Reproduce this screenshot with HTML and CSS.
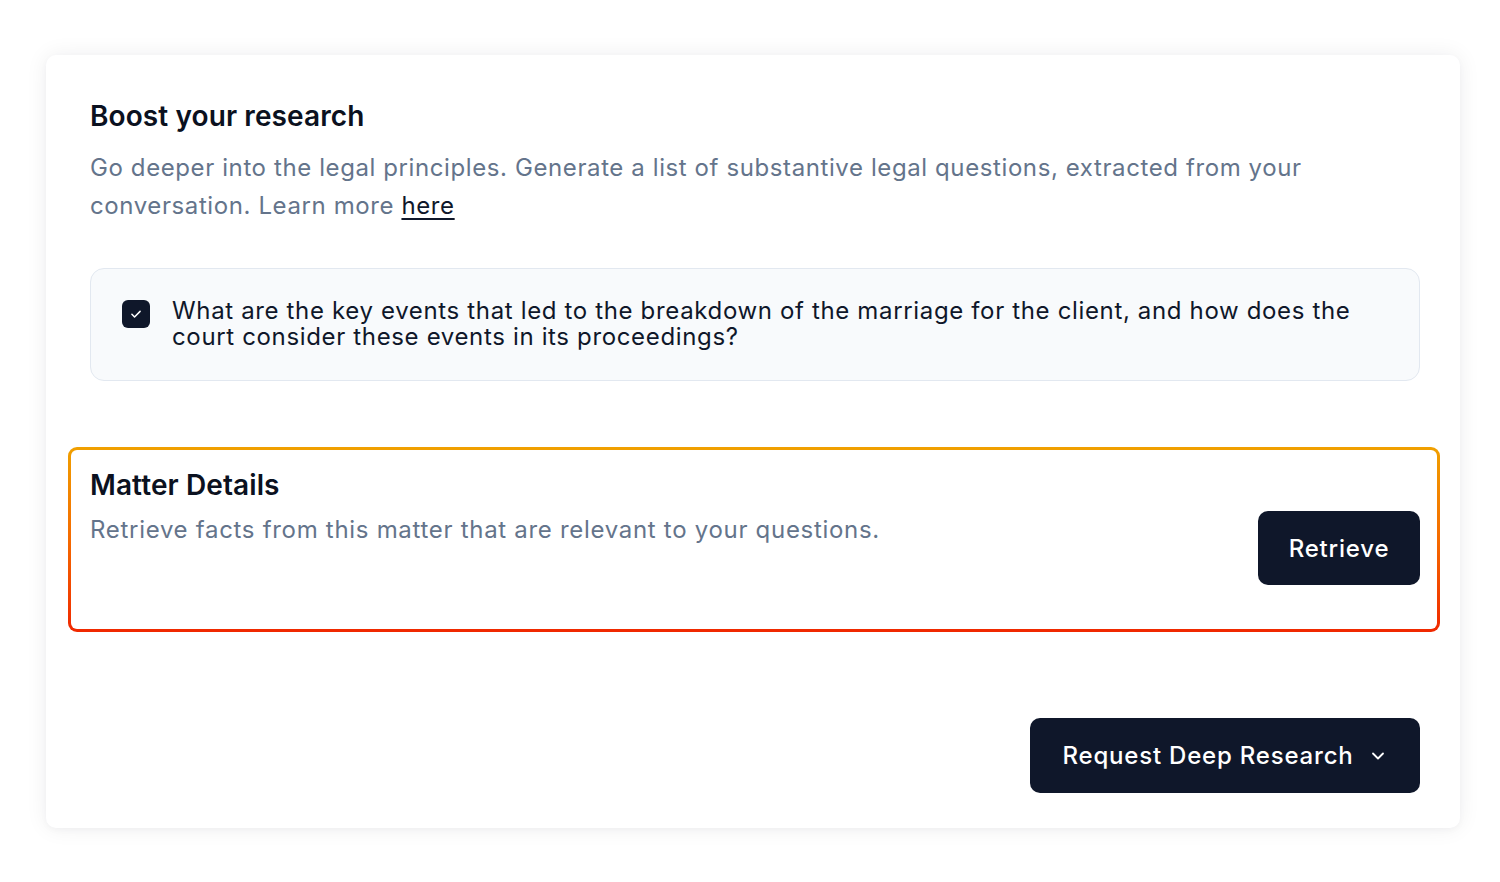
FILE: index.html
```html
<!DOCTYPE html>
<html lang="en">
<head>
<meta charset="utf-8">
<title>Boost your research</title>
<link rel="stylesheet" href="styles.css">
</head>
<body>
<div class="card">
  <h2 class="title">Boost your research</h2>
  <p class="lead">Go deeper into the legal principles. Generate a list of substantive legal questions, extracted from your conversation. Learn more <a href="#" class="link">here</a></p>

  <div class="question">
    <span class="check">
      <svg width="14" height="14" viewBox="0 0 24 24" fill="none" stroke="#fff" stroke-width="2.6" stroke-linecap="round" stroke-linejoin="round"><path d="M5 12.5l4.5 4.5L19 7.5"/></svg>
    </span>
    <span class="qtext">What are the key events that led to the breakdown of the marriage for the client, and how does the court consider these events in its proceedings?</span>
  </div>

  <div class="matter">
    <div class="matter-inner">
      <h3 class="title">Matter Details</h3>
      <div class="matter-row">
        <p class="sub">Retrieve facts from this matter that are relevant to your questions.</p>
        <button class="btn btn-retrieve">Retrieve</button>
      </div>
    </div>
  </div>

  <div class="actions">
    <button class="btn btn-request">Request Deep Research
      <svg class="chev" width="20" height="20" viewBox="0 0 24 24" fill="none" stroke="#fff" stroke-width="2.2" stroke-linecap="round" stroke-linejoin="round"><path d="M6 9l6 6 6-6"/></svg>
    </button>
  </div>
</div>
</body>
</html>
```
FILE: styles.css
```css
* { box-sizing: border-box; }
html, body { margin: 0; padding: 0; background: #ffffff; }
body {
  font-family: Inter, "Noto Sans", "Liberation Sans", sans-serif;
  color: #0f172a;
  padding: 55px 40px 54px 46px;
}
.card {
  width: 1414px;
  height: 773px;
  background: #fff;
  border-radius: 10px;
  box-shadow: 0 0 22px rgba(15, 23, 42, 0.07), 0 2px 6px rgba(15, 23, 42, 0.03);
  padding: 43px 40px 35px 44px;
  display: flex;
  flex-direction: column;
}
.title {
  margin: 0;
  font-size: 28px;
  line-height: 36px;
  font-weight: 600;
  letter-spacing: 0.1px;
  color: #0b1120;
}
.lead {
  margin: 15px 0 0;
  font-size: 24px;
  line-height: 38px;
  color: #64748b;
  letter-spacing: 0.6px;
}
.link { color: #0f172a; text-decoration: underline; text-underline-offset: 4px; text-decoration-thickness: 2px; }
.question {
  margin-top: 43px;
  border: 1px solid #e2e8f0;
  background: #f8fafc;
  border-radius: 14px;
  padding: 29px 40px 30px 31px;
  display: flex;
  gap: 22px;
  align-items: flex-start;
}
.check {
  flex: none;
  width: 28px;
  height: 28px;
  margin-top: 2px;
  background: #0f172a;
  border-radius: 6px;
  display: flex;
  align-items: center;
  justify-content: center;
}
.qtext {
  font-size: 24px;
  line-height: 26px;
  color: #0f172a;
  letter-spacing: 0.65px;
}
.matter {
  margin: 66px -20px 0 -22px;
  padding: 3px;
  border-radius: 9px;
  background: linear-gradient(180deg, #f0a000 0%, #f56a00 50%, #f02800 100%);
}
.matter-inner {
  background: #fff;
  border-radius: 6px;
  padding: 17px 17px 44px 19px;
}
.matter-row {
  display: flex;
  justify-content: space-between;
  align-items: flex-start;
  margin-top: 8px;
}
.sub {
  margin: 0;
  font-size: 24px;
  line-height: 38px;
  color: #64748b;
  letter-spacing: 0.7px;
}
.btn {
  font-family: inherit;
  border: none;
  background: #0f172a;
  color: #fff;
  font-size: 24px;
  font-weight: 500;
  letter-spacing: 0.8px;
  border-radius: 10px;
  cursor: pointer;
  display: inline-flex;
  align-items: center;
  justify-content: center;
}
.btn-retrieve {
  width: 162px;
  height: 74px;
}
.actions {
  margin-top: auto;
  display: flex;
  justify-content: flex-end;
}
.btn-request {
  width: 390px;
  height: 75px;
  gap: 14px;
}
.chev { flex: none; }
```
